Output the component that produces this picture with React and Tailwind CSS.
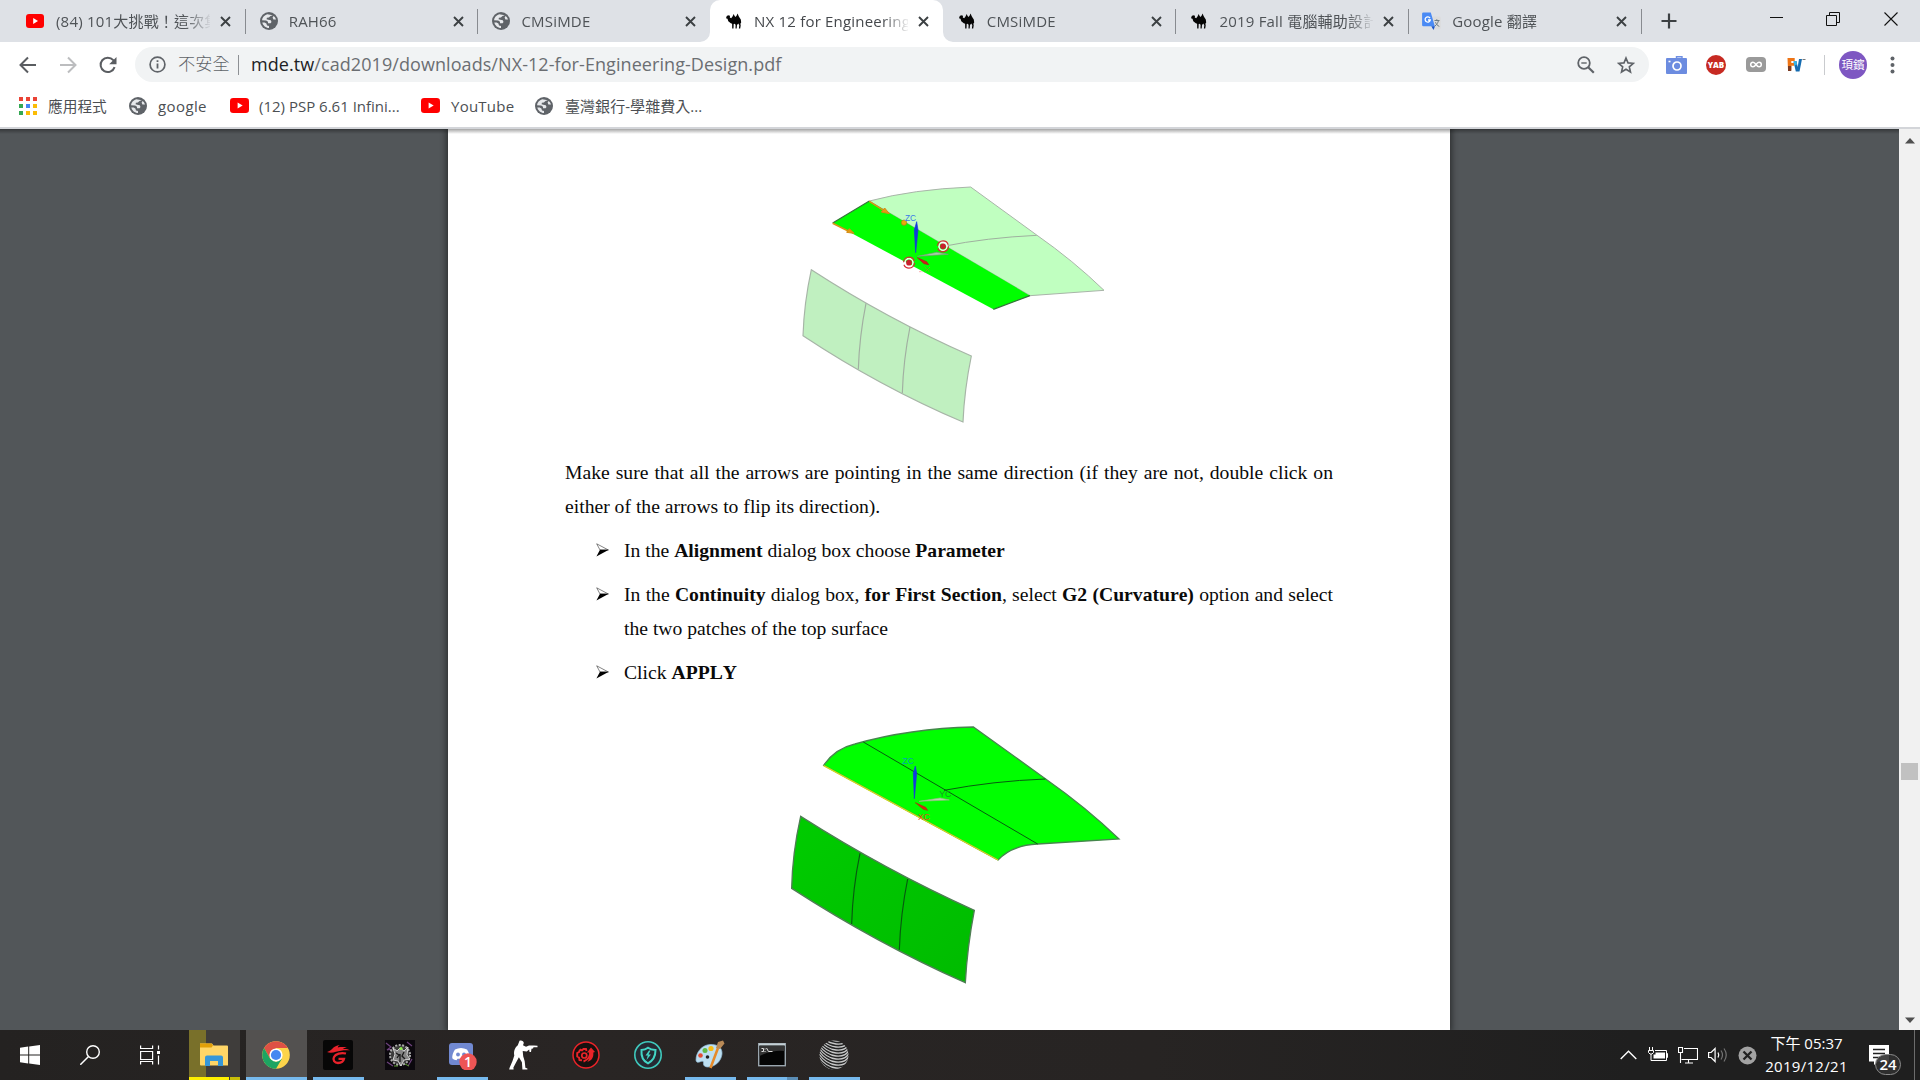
import React from "react";

const UI = "font-['Open_Sans','Noto_Sans_CJK_TC',sans-serif]";

/* ---------- small icons ---------- */

const YouTube = ({ className }) => (
  <svg className={className} viewBox="0 0 18 14">
    <rect width="18" height="14" rx="3" fill="#f00" />
    <path d="M7.2 4.1v5.8L12 7z" fill="#fff" />
  </svg>
);

const Globe = () => (
  <svg className="h-[18px] w-[18px] shrink-0" viewBox="0 0 18 18">
    <circle cx="9" cy="9" r="9" fill="#5f6368" />
    <path
      d="M7.2 2.200C4.400 3 2.200 5.400 2 8.300l4.200.1 1.800 1.400v1.500h2.600l.9-1.400-.7-1.700-2.500-.5-1.700-.4.3-1.500 2-.3 1.600-1.500 2.300-.8zM13.600 3.900l-1 1.600.8 1.900 2.600.2c-.4-1.500-1.200-2.800-2.400-3.700zM2.300 10.400c.8 3.100 3.500 5.500 6.700 5.600v-1.900l-2-.6-.6-1.900-1.800-1.200z"
      fill="#e6e8eb"
    />
  </svg>
);

const Camel = () => (
  <svg className="h-4 w-4 shrink-0" viewBox="0 0 16 16">
    <path
      d="M.2 4.300 1 2.800 3 2.200l1 .8-.2 1.500L5.200 5.200 6.500 3.400 7.700.9l.9 2.200 1 .8 1.100-1.500.9-2 1 2.600L13.800 5l1 1.500.4 3.100-.8 1.100.3 1.800-.5 3h-1.300l.4-3.200-1-1.700-1.300 1.500-.3 3.400H9.500l.1-3.700-1.100-1.100-.8.3-.2 4.600H6.200l-.1-4.900-1.300-.5-2.500-2L1.500 5.700.3 5.400z"
      fill="#050505"
    />
  </svg>
);

const Translate = () => (
  <svg className="h-[19px] w-[19px] shrink-0" viewBox="0 0 19 19">
    <path d="M8 4.500h9.500a1.200 1.200 0 0 1 1.200 1.200V16a1.200 1.200 0 0 1-1.200 1.200h-6z" fill="#dcdcdc" />
    <path d="M12.500 8.500h5M14.800 7.200v1.300M16.500 8.500c-.6 2.500-1.700 4-3.500 5.500M13.500 10.200c.7 2 2 3.400 3.800 4.200" stroke="#6e7d85" strokeWidth="1" fill="none" />
    <path d="M1.300.5h7.500l4 13.800H1.300A1.200 1.200 0 0 1 .1 13.100V1.700A1.200 1.200 0 0 1 1.300.5z" fill="#4a8af4" />
    <path d="m9.300 14.300 2.200 3.700 1.500-3.700z" fill="#1a56c8" />
    <path d="M8 6.100A2.600 2.600 0 1 0 8.300 8H6" stroke="#fff" strokeWidth="1.300" fill="none" />
  </svg>
);

const CloseX = () => (
  <svg className="h-[11px] w-[11px] shrink-0" viewBox="0 0 11 11">
    <path d="m1 1 9 9M10 1l-9 9" stroke="#3c4043" strokeWidth="1.900" fill="none" />
  </svg>
);

/* ---------- tab strip ---------- */

const tabs = [
  { icon: "yt", title: "(84) 101大挑戰！這次集", sep: true },
  { icon: "globe", title: "RAH66", sep: true },
  { icon: "globe", title: "CMSiMDE" },
  { icon: "camel", title: "NX 12 for Engineering", active: true },
  { icon: "camel", title: "CMSiMDE", sep: true },
  { icon: "camel", title: "2019 Fall 電腦輔助設計", sep: true },
  { icon: "tr", title: "Google 翻譯", sep: true },
];

function Tab({ tab }) {
  return (
    <div className={"relative flex h-[42px] w-[232.7px] shrink-0 items-center pl-[14px] " + (tab.active ? "rounded-t-[10px] bg-white" : "")}>
      <div className="flex w-[30px] shrink-0 items-center">
        {tab.icon === "yt" && <YouTube className="h-[14px] w-[18px]" />}
        {tab.icon === "globe" && <span className="ml-px flex"><Globe /></span>}
        {tab.icon === "camel" && <span className="ml-[2px] flex"><Camel /></span>}
        {tab.icon === "tr" && <Translate />}
      </div>
      <div className={"w-[154px] overflow-hidden whitespace-nowrap text-[15px] leading-[22px] tracking-[0.2px] [mask-image:linear-gradient(to_right,black_128px,transparent_156px)] " + (tab.active ? "text-[#45484c]" : "text-[#4f5357]")}>
        {tab.title}
      </div>
      <div className="ml-[10px] flex"><CloseX /></div>
      {tab.sep && <div className="absolute right-[-1px] top-[9px] h-[25px] w-px bg-[#888b90]" />}
      {tab.active && (
        <>
          <svg className="absolute -left-[10px] bottom-0 h-[10px] w-[10px]" viewBox="0 0 10 10"><path d="M10 0v10H0A10 10 0 0 0 10 0z" fill="#fff" /></svg>
          <svg className="absolute -right-[10px] bottom-0 h-[10px] w-[10px]" viewBox="0 0 10 10"><path d="M0 0v10h10A10 10 0 0 1 0 0z" fill="#fff" /></svg>
        </>
      )}
    </div>
  );
}

function TabStrip() {
  return (
    <div className="flex h-[42px] bg-[#dee1e6] pl-[12px]">
      {tabs.map((t, i) => <Tab key={i} tab={t} />)}
      <svg className="ml-[20px] mt-[13px] h-4 w-4" viewBox="0 0 16 16"><path d="M8 .5v15M.5 8h15" stroke="#3c4043" strokeWidth="2.200" /></svg>
      <div className="ml-auto flex pr-[22px] pt-[12px]">
        <svg className="h-[14px] w-[14px]" viewBox="0 0 14 14"><path d="M0 5.500h13" stroke="#111" /></svg>
        <svg className="ml-[42px] h-[14px] w-[14px]" viewBox="0 0 14 14"><path d="M.5 3.500h10v10H.5zM3.500 3.500v-3h10v10h-3" fill="none" stroke="#111" /></svg>
        <svg className="ml-[44px] h-[14px] w-[14px]" viewBox="0 0 14 14"><path d="m.5.5 13 13M13.500.5l-13 13" stroke="#111" strokeWidth="1.100" /></svg>
      </div>
    </div>
  );
}

/* ---------- toolbar ---------- */

function Toolbar() {
  return (
    <div className="flex h-[45px] items-center bg-white pl-[19px]">
      <svg className="h-[18px] w-[17px]" viewBox="0 0 17 18"><path d="M17 9H2M9 1.500 1.500 9 9 16.500" stroke="#5a5d61" strokeWidth="2" fill="none" /></svg>
      <svg className="ml-[24px] h-[18px] w-[17px]" viewBox="0 0 17 18"><path d="M0 9h15M8 1.500 15.500 9 8 16.500" stroke="#bcbdbf" strokeWidth="2" fill="none" /></svg>
      <svg className="ml-[22px] h-[18px] w-[18px]" viewBox="0 0 18 18">
        <path d="M15.600 11.200A7.200 7.200 0 1 1 14.300 4.200L16 6" stroke="#5a5d61" strokeWidth="2" fill="none" />
        <path d="M17.500 1v7.300h-7.300z" fill="#5a5d61" />
      </svg>
      <div className="ml-[18px] flex h-[35px] w-[1514px] shrink-0 items-center rounded-full bg-[#f1f3f4] pl-[14px]">
        <svg className="h-[17px] w-[17px]" viewBox="0 0 17 17">
          <circle cx="8.500" cy="8.500" r="7.400" fill="none" stroke="#5f6368" strokeWidth="1.700" />
          <path d="M8.500 7.500v5M8.500 4.200V6" stroke="#5f6368" strokeWidth="1.800" />
        </svg>
        <span className="ml-[12px] w-[52px] whitespace-nowrap pb-px text-[17.200px] font-light leading-[24px] text-[#5f6368]">不安全</span>
        <span className="ml-[8px] h-5 w-px bg-[#8d9094]" />
        <span className="ml-[12px] whitespace-nowrap pb-[2px] text-[18px] leading-[24px] tracking-[0.07px] text-[#6b6e72]">
          <span className="text-[#202124]">mde.tw</span>/cad2019/downloads/NX-12-for-Engineering-Design.pdf
        </span>
        <svg className="ml-auto h-[18px] w-[18px]" viewBox="0 0 18 18">
          <circle cx="7" cy="7" r="5.800" fill="none" stroke="#5f6368" strokeWidth="1.800" />
          <path d="m11.200 11.200 5.600 5.600" stroke="#5f6368" strokeWidth="2.200" /><path d="M4.300 7h5.400" stroke="#5f6368" strokeWidth="1.400" />
        </svg>
        <svg className="ml-[22px] mr-[14px] h-[18px] w-[18px]" viewBox="0 0 18 18">
          <path d="m9 2 2 4.900 5.300.4-4 3.500 1.200 5.200L9 13.200 4.500 16l1.200-5.200-4-3.500L7 6.900z" fill="none" stroke="#5f6368" strokeWidth="1.600" />
        </svg>
      </div>
      <div className="ml-[17px] flex items-center">
        <svg className="h-[18px] w-[21px]" viewBox="0 0 21 18">
          <path d="M10.500 2.500V.8H16v1.700" fill="none" stroke="#6f8fe3" strokeWidth="1.400" />
          <rect y="2" width="21" height="16" rx="1" fill="#6c8ce0" />
          <circle cx="11" cy="10" r="4" fill="none" stroke="#fff" strokeWidth="1.700" /><path d="M2.500 5.500h2" stroke="#fff" strokeWidth="1.600" />
        </svg>
        <div className="ml-[19px] flex h-5 w-5 items-center justify-center rounded-full bg-[#c72a22] text-[8px] font-extrabold text-white">YAB</div>
        <svg className="ml-[20px] h-[15px] w-5" viewBox="0 0 20 15">
          <rect width="20" height="15" rx="4" fill="#9a9a9a" />
          <path d="M10 7.500C8.800 5.800 8 5.200 7 5.200a2.300 2.300 0 0 0 0 4.600c1 0 1.800-.6 3-2.300s2-2.300 3-2.300a2.300 2.300 0 0 1 0 4.600c-1 0-1.800-.6-3-2.300z" fill="none" stroke="#fff" strokeWidth="1.500" />
        </svg>
        <svg className="ml-[21px] h-[16px] w-[19px]" viewBox="0 0 19 16">
          <path d="M.5 1h7.200v3H4.300v2h2.800v2.800H4.300V13H1z" fill="#ee7415" />
          <path d="M1 9h3.300v5H1z" fill="#7b3b23" />
          <path d="M6.500 4.500 9.500 4l1.200 6L12 2h3l-2.500 12.500H8.800z" fill="#146bb0" />
          <path d="M6.500 4.500 9.500 4l.5 3.500-2.700 1.200z" fill="#38b4e4" /><path d="M15.500 2.500h3" stroke="#777" />
        </svg>
        <span className="ml-[18px] h-5 w-px bg-[#c9cbce]" />
        <div className="ml-[14px] flex h-[28px] w-[28px] items-center justify-center overflow-hidden whitespace-nowrap rounded-full bg-[#7e57c2] text-[11.500px] text-white">頊鑌</div>
        <svg className="ml-[23px] h-[18px] w-[5px]" viewBox="0 0 5 18"><g fill="#5f6368"><circle cx="2.500" cy="2.500" r="2" /><circle cx="2.500" cy="9" r="2" /><circle cx="2.500" cy="15.500" r="2" /></g></svg>
      </div>
    </div>
  );
}

const appColors = ["#ea4335", "#ea4335", "#ea4335", "#34a853", "#4285f4", "#fbbc05", "#34a853", "#fbbc05", "#fbbc05"];

function Bookmarks() {
  return (
    <div className="flex h-[42px] items-center whitespace-nowrap border-b-2 border-[#d3d5d9] bg-white pb-[3px] pl-[19px] text-[15px] leading-[22px] tracking-[0.25px] text-[#4c4f53]">
      <div className="grid grid-cols-3 gap-[3px]">
        {appColors.map((c, i) => <span key={i} className="h-1 w-1" style={{ backgroundColor: c }} />)}
      </div>
      <span className="ml-[11px] w-[60px] text-[14.700px] tracking-normal">應用程式</span>
      <span className="ml-[21px] flex"><Globe /></span>
      <span className="ml-[11px] w-[51px] tracking-[0.4px]">google</span>
      <YouTube className="ml-[21px] h-[15px] w-[19px]" />
      <span className="ml-[10px] w-[142px] tracking-[0px]">(12) PSP 6.61 Infini...</span>
      <YouTube className="ml-[20px] h-[15px] w-[19px]" />
      <span className="ml-[11px] w-[64px]">YouTube</span>
      <span className="ml-[20px] flex"><Globe /></span>
      <span className="ml-[12px] tracking-[0.05px]">臺灣銀行-學雜費入...</span>
    </div>
  );
}

/* ---------- document figures ---------- */

function GuideFigure() {
  return (
    <svg className="ml-[332px] mt-[41px] block h-[270px] w-[350px]" viewBox="0 0 1050 810">
      <path d="M268 93Q400 58 572 51L770 195Q880 272 972 361L750 377Z" fill="#c0ffc0" stroke="#a9b5a9" strokeWidth="3" />
      <path d="M490 229Q620 203 770 196" fill="none" stroke="#9fb09f" strokeWidth="3" />
      <path d="M158 159 268 93 750 377 640 418Z" fill="#00ff00" />
      <path d="M158 159 268 93M750 377 640 418" stroke="#35733a" strokeWidth="3.500" />
      <path d="M94 299Q320 446 574 558Q553 660 549 756Q300 650 69 497Q72 400 94 299Z" fill="#c0f0c0" stroke="#a7b5a7" strokeWidth="3.500" />
      <path d="M258 400Q238 500 235 598M390 471Q370 570 367 669" fill="none" stroke="#a1afa1" strokeWidth="3.500" />
      <path d="M268 94 312 122M158 160 206 184" stroke="#d99417" strokeWidth="5" />
      <path d="M304 126 314 114 328 131ZM200 187 208 176 222 190Z" fill="#e49a12" stroke="#d48a12" strokeWidth="3" />
      <circle cx="372" cy="158" r="8" fill="#eaa80c" stroke="#a97c12" strokeWidth="2" />
      <path d="M410 155 403 180 407 248 414 180Z" fill="#1238e0" stroke="#1238e0" strokeWidth="2" />
      <path d="M412 259 505 253 470 247Z" fill="#a9cda9" stroke="#799c79" strokeWidth="2" />
      <path d="M412 263 432 281 446 284 440 275Z" fill="#d31919" stroke="#a91919" strokeWidth="2" />
      <text x="375" y="153" fontSize="25" fill="#3978e8" fontFamily="Liberation Sans, sans-serif">ZC</text>
      <path d="M418 305h9M434 291l16 16M450 291l-16 16" stroke="#f05252" strokeWidth="2" strokeDasharray="4 3" />
      {[[489, 229], [387, 278]].map(([x, y]) => (
        <g key={x}>
          <circle cx={x} cy={y} r="12" fill="none" stroke="#fff" strokeWidth="5" opacity=".9" />
          <circle cx={x} cy={y} r="16.500" fill="none" stroke="#d62a35" strokeWidth="3.500" strokeDasharray="44 8" />
          <circle cx={x} cy={y} r="8.500" fill="#c9202c" />
        </g>
      ))}
    </svg>
  );
}

function ResultFigure() {
  return (
    <svg className="ml-[322px] mt-[21px] block h-[290px] w-[370px]" viewBox="0 0 1110 870">
      <defs>
        <linearGradient id="side" x1="0" y1="0" x2="1" y2="1"><stop offset="0" stopColor="#00cc00" /><stop offset="1" stopColor="#00bb00" /></linearGradient>
      </defs>
      <path d="M161 166Q195 116 255 102Q420 55 610 51L826 206Q950 293 1047 387L803 402Q725 406 684 450Z" fill="#00ff00" stroke="#45874c" strokeWidth="4" />
      <path d="M161 167 684 450" stroke="#d3dc1d" strokeWidth="4" />
      <path d="M280 96 803 402M522 241Q670 213 826 207" fill="none" stroke="#075b10" strokeWidth="3" />
      <path d="M92 319Q345 480 613 601Q592 710 586 818Q320 700 65 535Q67 430 92 319Z" fill="url(#side)" stroke="#4f7e54" strokeWidth="4" />
      <path d="M270 430Q248 535 245 642M413 507Q392 610 388 719" fill="none" stroke="#075a10" strokeWidth="3.500" />
      <path d="M436 168 430 190 433 266 440 190Z" fill="#1238e0" stroke="#1238e0" strokeWidth="2" />
      <path d="M447 274 538 270 510 264Z" fill="#b8d8ad" stroke="#94ba83" strokeWidth="2" />
      <path d="M436 278 460 298 473 301 467 292Z" fill="#d22b11" stroke="#a9320e" strokeWidth="2" />
      <g fontFamily="Liberation Sans, sans-serif" fontSize="26">
        <text x="397" y="163" fill="#00a5b5">ZC</text>
        <text x="508" y="260" fill="#169b25">YC</text>
        <text x="444" y="329" fill="#dc5419">XC</text>
      </g>
    </svg>
  );
}

function Bullet({ children, justify }) {
  return (
    <li className="mt-[10px] flex pl-[31px]">
      <svg className="mt-[10px] h-[14px] w-[13px] shrink-0" viewBox="0 0 13 14">
        <path d="M.7.8 12.400 7 4 7z" fill="#fff" stroke="#333" strokeWidth=".6" />
        <path d="M12.800 6.800.4 13.500 4 6.800z" fill="#000" />
      </svg>
      <p className={"ml-[15px] flex-1 " + (justify ? "text-justify" : "")}>{children}</p>
    </li>
  );
}

function Page() {
  return (
    <div className="ml-[448px] w-[1002px] overflow-hidden bg-white shadow-[0_0_6px_2px_rgba(0,0,0,0.45)]">
      <GuideFigure />
      <div className="ml-[117px] mt-[15px] w-[768px] font-['Liberation_Serif',serif] text-[19.650px] leading-[34px] text-[#0a0a0a] [font-kerning:none]">
        <p className="text-justify">
          Make sure that all the arrows are pointing in the same direction (if they are not, double click on either of the arrows to flip its direction).
        </p>
        <ul>
          <Bullet>In the <b>Alignment</b> dialog box choose <b>Parameter</b></Bullet>
          <Bullet justify>In the <b>Continuity</b> dialog box, <b>for First Section</b>, select <b>G2 (Curvature)</b> option and select the two patches of the top surface</Bullet>
          <Bullet>Click <b>APPLY</b></Bullet>
        </ul>
      </div>
      <ResultFigure />
    </div>
  );
}

function Scrollbar() {
  return (
    <div className="ml-auto flex w-[21px] flex-col items-center bg-[#f1f1f1]">
      <svg className="mt-[9px] h-[6px] w-[10px]" viewBox="0 0 10 6"><path d="M5 0l5 5.500H0z" fill="#505050" /></svg>
      <div className="mt-[619px] h-[17px] w-[17px] bg-[#c1c1c1]" />
      <svg className="mb-[7px] mt-auto h-[6px] w-[10px]" viewBox="0 0 10 6"><path d="M5 6 0 .5h10z" fill="#505050" /></svg>
    </div>
  );
}

/* ---------- taskbar ---------- */

const Garena = () => (
  <svg className="h-[30px] w-[30px]" viewBox="0 0 30 30">
    <rect width="30" height="30" rx="2" fill="#070707" />
    <path d="M4 12c3-.8 4.500-2.500 6.500-4.500C12.500 5.600 15 5.500 17 5c-1.500.8-2 1.400-2.200 2.400 3-.5 6.200-.4 9.200 0-2 .2-3.200.6-4.200 1.600 2.400-.3 5.200 0 7.200 1.300-5-.5-10 .1-14 1.500-3 1-6.500 1.400-9 .2z" fill="#e8222b" />
    <path d="M23 13.500c-5-1.200-10.500.3-12 3.500-1.500 3 .5 6 4 6 3.300 0 5.500-1.800 6-4.200h-5.500" fill="none" stroke="#e8222b" strokeWidth="2.300" />
  </svg>
);

const Emblem = () => (
  <svg className="h-[30px] w-[30px]" viewBox="0 0 30 30">
    <rect width="30" height="30" fill="#0b080d" />
    <path d="M1 3l5 4-4 3 6-1M22 2l5 4M2 22l6 4M27 19l-4 7" stroke="#6e427e" strokeWidth="1.200" />
    <circle cx="15" cy="15" r="10" fill="#3c3c3c" stroke="#aaa" strokeWidth="2" strokeDasharray="2 1.500" />
    <path d="M8 8l4 3 3-3 4 3 4-4-1 8 3 4-6 1-3 6-3-5-5-1 2-6z" fill="#858585" stroke="#ddd" strokeWidth=".9" />
    <path d="m11 13 3 2-2 3M19 12l-2 4 3 3M15 14v8" stroke="#191919" strokeWidth="1.300" fill="none" />
    <circle cx="16" cy="8.500" r="1.600" fill="#8bea4d" /><path d="M20 24l4 2M9 26h4" stroke="#5d9d33" />
  </svg>
);

const Discord = () => (
  <svg className="h-[30px] w-[30px]" viewBox="0 0 30 30">
    <rect x="2" y="3" width="24" height="22" rx="3" fill="#7189d1" />
    <path d="M8 9.500c4-2 8-2 12 0 2 3 3 6 2.700 8.800-1.500 1.400-3 1.900-4.200 1.900l-1-1.500h-7l-1 1.500c-1.200 0-2.700-.5-4.200-1.900C5 15.500 6 12.500 8 9.500z" fill="#fff" />
    <circle cx="11" cy="14.500" r="1.900" fill="#7189d1" /><circle cx="17" cy="14.500" r="1.900" fill="#7189d1" />
    <circle cx="21" cy="22" r="8.700" fill="#ee5555" />
    <text x="21" y="27" textAnchor="middle" fontSize="14" fontWeight="600" fill="#fff" fontFamily="Open Sans, sans-serif">1</text>
  </svg>
);

const Soldier = () => (
  <svg className="h-[30px] w-[30px]" viewBox="0 0 30 30">
    <path d="M10.500.8c2-.8 4.200.2 4.300 2.300l-.8 2.200 3 1.400 3-1.200h5l3.500.2v1.600h-4l-.5 1.300-1.500.2-.5 3.300h-1.500l-.3-2.500-2.500 2-4-.6.5 5.200 1.500 5 .7 6.500 2 .8v1h-5l-.5-7.300-3-5-3 5.500-2.500 4.800.2 2H.2l.3-1.500 3-7 1.800-5.500c-.8-4 .5-8 3.500-10.200z" fill="#fff" />
  </svg>
);

const Booster = () => (
  <svg className="h-[30px] w-[30px]" viewBox="0 0 30 30">
    <circle cx="15" cy="15" r="13" fill="#17110f" stroke="#ea2429" strokeWidth="1.500" />
    <path d="m9 9.500 2 .8 1.500-1.300h2.500l.5 2M9 9.500 8 12l-1.800 1v3.500l1.800 1 .5 2.500 2.500.2M19 10.500c.8 5-1.500 9-6.500 11" fill="none" stroke="#ea2429" strokeWidth="1.900" />
    <circle cx="13.300" cy="15.500" r="2.500" fill="none" stroke="#ea2429" strokeWidth="1.700" />
    <path d="m20 7.500 4 4.500-1.700.5c.5 5-1.500 8-6 9.500 2-2.500 2.500-5 2.200-9.500H16z" fill="#ea2429" />
  </svg>
);

const Shield = () => (
  <svg className="h-[30px] w-[30px]" viewBox="0 0 30 30">
    <circle cx="15" cy="15" r="13.200" fill="#252a33" stroke="#3fc9bd" strokeWidth="1.600" />
    <path d="M8.500 10c3 0 5-1 6.500-2.200 2.300 1.800 5 2.200 7.500 2.200 0 6-2 10.500-7.500 13.300C10 21 8 16 8.500 10z" fill="none" stroke="#43d5c6" strokeWidth="2" />
    <path d="m16 10.500-3.500 5h2.300L13.500 20l4.500-5.500h-2.500l2-4z" fill="#43d5c6" />
  </svg>
);

const Paint = () => (
  <svg className="h-[30px] w-[30px]" viewBox="0 0 30 30">
    <path d="M1 20C1 12 7 5 15 4.500 23 4 27.500 8 27 14c-.6 7-7 13-14 13-3 0-5-1.500-4.500-4 .3-2-1-2-2.500-1.600C4 22.500 1 23 1 20z" fill="#bddff2" stroke="#91bcd7" strokeWidth=".7" />
    <circle cx="5.500" cy="15.500" r="2.300" fill="#e34c32" /><circle cx="10" cy="10.500" r="2.500" fill="#62b946" /><circle cx="16" cy="8.500" r="2.600" fill="#f7bd17" /><circle cx="12.500" cy="17" r="1.800" fill="#242424" />
    <path d="M23 8 15.500 28" stroke="#e58a2b" strokeWidth="2.500" /><path d="m21 8 2-6 5-1.500 1.500 3L25 9z" fill="#b98a57" />
  </svg>
);

const Terminal = () => (
  <svg className="h-[30px] w-[30px]" viewBox="0 0 30 30">
    <rect x="1.700" y="3.700" width="26.600" height="22" fill="#050505" stroke="#9aa6ae" strokeWidth="1.400" />
    <path d="M2 4.500h26" stroke="#c5d0d5" strokeWidth="2" /><path d="M2.500 6h25v5Q15 10 2.500 16z" fill="#343434" />
    <path d="M4.500 8.500h2v3h-2M8 8.500v1M8 11v1M9.500 8l2 3.500h4" stroke="#ddd" fill="none" />
  </svg>
);

const sphereLines = [-16, -13, -10, -7, -4, -1, 2, 5, 8, 11, 14, 17, 20, 23];

const Sphere = () => (
  <svg className="h-[30px] w-[30px]" viewBox="0 0 30 30">
    <clipPath id="ball"><circle cx="15" cy="15" r="14.500" /></clipPath>
    <g clipPath="url(#ball)">
      <rect width="30" height="30" fill="#242424" />
      <g fill="none" stroke="#c9c9c9" strokeWidth="1.300">
        {sphereLines.map((y) => <path key={y} d={`M0 ${y + 3}Q7 ${y + 13} 17 ${y + 14}T30 ${y + 8}`} />)}
      </g>
    </g>
  </svg>
);

const Explorer = () => (
  <svg className="h-[30px] w-[30px]" viewBox="0 0 30 30">
    <path d="M1 3.500h12l1.500 2H28a1 1 0 0 1 1 1v19H2a1 1 0 0 1-1-1z" fill="#ffd667" />
    <path d="M1 3.500h11.500l1.500 2-1.500 2H1z" fill="#e2a008" />
    <path d="M6 26V17.500a2 2 0 0 1 2-2h14a2 2 0 0 1 2 2V26h-5v-5h-8v5z" fill="#3697d8" />
  </svg>
);

const Chrome = () => (
  <svg className="h-[30px] w-[30px]" viewBox="0 0 30 30">
    <circle cx="15" cy="15" r="13.800" fill="#fdd44a" />
    <path d="M3.050 8.100A13.800 13.800 0 0 1 26.950 8.100H15L9 18.450z" fill="#de5145" />
    <path d="M3.050 8.100A13.800 13.800 0 0 0 15 28.800L21 18.450 15 21.900 9 18.450z" fill="#1da462" />
    <circle cx="15" cy="15" r="6.600" fill="#fff" /><circle cx="15" cy="15" r="5.100" fill="#4688f1" />
  </svg>
);

const apps = [
  { Icon: Explorer, kind: "flash" },
  { Icon: Chrome, kind: "active" },
  { Icon: Garena, kind: "open" },
  { Icon: Emblem },
  { Icon: Discord, kind: "open" },
  { Icon: Soldier },
  { Icon: Booster },
  { Icon: Shield },
  { Icon: Paint, kind: "open" },
  { Icon: Terminal, kind: "stack" },
  { Icon: Sphere, kind: "open" },
];

function TaskButton({ Icon, kind }) {
  return (
    <div className="flex w-[62px] shrink-0 justify-end">
      <div className={"flex h-[50px] flex-col items-center " + (kind === "active" ? "w-[61px] bg-[#535150]" : "mr-[5px] w-[51px] ") + (kind === "flash" ? "bg-[linear-gradient(to_right,#79702a_17px,#3f3d3b_17px)]" : "")}>
        <div className="flex h-[47px] items-center pr-[2px] pt-[3px]"><Icon /></div>
        {kind === "flash" && <div className="flex h-[3px] w-full"><span className="w-[40px] bg-[#fff000]" /><span className="ml-px flex-1 bg-[#c8bd08]" /></div>}
        {kind === "stack" && <div className="flex h-[3px] w-full"><span className="w-[40px] bg-[#76b9ed]" /><span className="flex-1 bg-[#5b8db5]" /></div>}
        {(kind === "open" || kind === "active") && <div className="h-[3px] w-full bg-[#76b9ed]" />}
      </div>
    </div>
  );
}

function Taskbar() {
  return (
    <div className="flex h-[50px] bg-[linear-gradient(to_right,#242221,#292524_30%,#272423_60%,#1f1f1f_85%)] text-white">
      <div className="flex w-[183px] items-center">
        <svg className="ml-[20px] h-5 w-5" viewBox="0 0 20 20"><path d="M0 2.700 8.200 1.600v7.900H0zM9.200 1.400 20 0v9.500H9.200zM0 10.500h8.200v7.900L0 17.300zM9.200 10.500H20V20L9.200 18.600z" fill="#fff" /></svg>
        <svg className="ml-[40px] h-5 w-5" viewBox="0 0 20 20"><circle cx="13" cy="7" r="6.300" fill="none" stroke="#fff" strokeWidth="1.400" /><path d="M8.500 11.500.3 19.700" stroke="#fff" strokeWidth="1.500" /></svg>
        <svg className="ml-[40px] h-5 w-5" viewBox="0 0 20 20"><path d="M.6.500v3h12v-3M.6 6.500h12v8H.6zM.6 19.500v-3h12v3M18.500.5v4M18.500 10.500v9" fill="none" stroke="#fff" strokeWidth="1.200" /><path d="M17 6h3v3h-3z" fill="#fff" /></svg>
      </div>
      {apps.map((a, i) => <TaskButton key={i} {...a} />)}
      <div className="ml-auto flex h-full items-center">
        <svg className="h-[10px] w-[17px]" viewBox="0 0 17 10"><path d="m.7 9 7.800-7.800L16.300 9" fill="none" stroke="#fff" strokeWidth="1.400" /></svg>
        <svg className="ml-[11px] h-[16px] w-[20px]" viewBox="0 0 20 16">
          <path d="M1.500 0v3M4.500 0v3M.5 3.500h5v2l-1.500 1.500H2L.5 5.500zM3 7v6.500h3" fill="none" stroke="#fff" />
          <path d="M7 3.500h11.500v10H5M18.500 6.500h1v4h-1" fill="none" stroke="#fff" /><path d="M7.500 5.500H17v6H5.500v-4h2z" fill="#fff" />
        </svg>
        <svg className="ml-[10px] h-[17px] w-5" viewBox="0 0 20 17"><path d="M6 1.500h13.500v11H3.500M10.500 12.500v3M7 16h8M.5.5h4v5h-4zM2.500 5.500v10.500" fill="none" stroke="#fff" strokeWidth="1.100" /></svg>
        <svg className="ml-[10px] h-[16px] w-5" viewBox="0 0 20 16"><path d="M.6 5.500h2.500l4-4v13l-4-4H.6z" fill="none" stroke="#fff" strokeWidth="1.200" /><path d="M10 5.500q1.500 2.500 0 5" stroke="#fff" fill="none" strokeWidth="1.200" /><path d="M13 3.500q3 4.500 0 9M16 1.500q4.500 6.500 0 13" stroke="#737373" fill="none" strokeWidth="1.200" /></svg>
        <svg className="ml-[10px] h-[19px] w-[19px]" viewBox="0 0 19 19"><circle cx="9.500" cy="9.500" r="9" fill="#a2a2a2" /><path d="m5.500 5.500 8 8M13.500 5.500l-8 8" stroke="#222" strokeWidth="2.300" /></svg>
        <div className="ml-[8px] flex w-[83px] flex-col items-center whitespace-nowrap text-[15px] leading-[23px]">
          <span>下午 05:37</span>
          <span className="tracking-[0.3px]">2019/12/21</span>
        </div>
        <div className="relative ml-[21px] h-5 w-5">
          <svg className="h-5 w-5" viewBox="0 0 20 20"><path d="M0 0h20v16.500H9L5 20v-3.500H0z" fill="#fff" /><path d="M4 4.500h12M4 8.500h12M4 12.500h7" stroke="#222" strokeWidth="1.300" /></svg>
          <div className="absolute left-[6px] top-[9px] flex h-[21px] w-[26px] items-center justify-center rounded-full border border-[#8b8b8b] bg-[#303030]/90 text-[15px] font-semibold leading-none">24</div>
        </div>
        <div className="ml-[25px] mr-[5px] h-full w-px bg-[#6c6c6c]" />
      </div>
    </div>
  );
}

export default function App() {
  return (
    <div className={"flex h-[1080px] w-[1920px] flex-col overflow-hidden bg-white " + UI}>
      <TabStrip />
      <Toolbar />
      <Bookmarks />
      <div className="relative flex h-[901px] overflow-hidden bg-[#525659]">
        <Page />
        <Scrollbar />
        <div className="absolute left-0 top-0 h-[5px] w-[1899px] bg-gradient-to-b from-black/35 to-transparent" />
      </div>
      <Taskbar />
    </div>
  );
}
